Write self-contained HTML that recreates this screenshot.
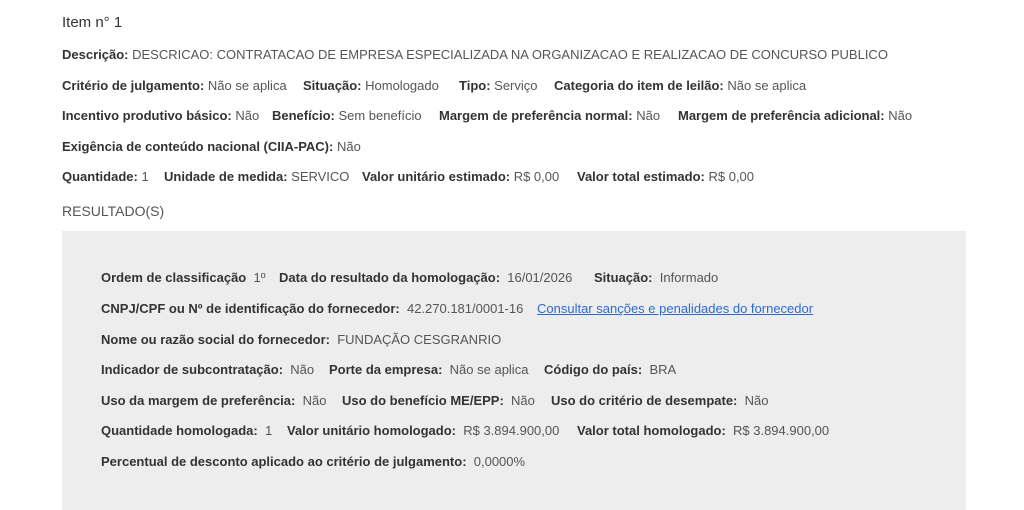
<!DOCTYPE html>
<html><head><meta charset="utf-8"><style>
body{margin:0;width:1024px;height:510px;background:#fff;position:relative;overflow:hidden;font-family:"Liberation Sans",sans-serif;color:#555;font-size:13px}
.s{position:absolute;white-space:nowrap;line-height:18px}
b{color:#333;font-weight:bold}
.box{position:absolute;left:62px;top:231px;width:904px;height:279px;background:#ededed}
a{color:#2a6ad8;text-decoration:underline}
</style></head><body>
<div class="s" style="left:62px;top:13px;font-size:15px;color:#333;line-height:20px">Item n° 1</div>
<div class="s" style="left:62px;top:46px"><b>Descrição:</b> DESCRICAO: CONTRATACAO DE EMPRESA ESPECIALIZADA NA ORGANIZACAO E REALIZACAO DE CONCURSO PUBLICO</div>
<div class="s" style="left:62px;top:77px"><b>Critério de julgamento:</b> Não se aplica</div>
<div class="s" style="left:303px;top:77px"><b>Situação:</b> Homologado</div>
<div class="s" style="left:459px;top:77px"><b>Tipo:</b> Serviço</div>
<div class="s" style="left:554px;top:77px"><b>Categoria do item de leilão:</b> Não se aplica</div>
<div class="s" style="left:62px;top:107px"><b>Incentivo produtivo básico:</b> Não</div>
<div class="s" style="left:272px;top:107px"><b>Benefício:</b> Sem benefício</div>
<div class="s" style="left:439px;top:107px"><b>Margem de preferência normal:</b> Não</div>
<div class="s" style="left:678px;top:107px"><b>Margem de preferência adicional:</b> Não</div>
<div class="s" style="left:62px;top:138px"><b>Exigência de conteúdo nacional (CIIA-PAC):</b> Não</div>
<div class="s" style="left:62px;top:168px"><b>Quantidade:</b> 1</div>
<div class="s" style="left:164px;top:168px"><b>Unidade de medida:</b> SERVICO</div>
<div class="s" style="left:362px;top:168px"><b>Valor unitário estimado:</b> R$ 0,00</div>
<div class="s" style="left:577px;top:168px"><b>Valor total estimado:</b> R$ 0,00</div>
<div class="s" style="left:62px;top:201px;font-size:14px;line-height:20px">RESULTADO(S)</div>
<div class="box"></div>
<div class="s" style="left:101px;top:269px"><b>Ordem de classificação</b>&nbsp; 1º</div>
<div class="s" style="left:279px;top:269px"><b>Data do resultado da homologação:</b>&nbsp; 16/01/2026</div>
<div class="s" style="left:594px;top:269px"><b>Situação:</b>&nbsp; Informado</div>
<div class="s" style="left:101px;top:300px"><b>CNPJ/CPF ou Nº de identificação do fornecedor:</b>&nbsp; 42.270.181/0001-16</div>
<div class="s" style="left:537px;top:300px"><a>Consultar sanções e penalidades do fornecedor</a></div>
<div class="s" style="left:101px;top:331px"><b>Nome ou razão social do fornecedor:</b>&nbsp; FUNDAÇÃO CESGRANRIO</div>
<div class="s" style="left:101px;top:361px"><b>Indicador de subcontratação:</b>&nbsp; Não</div>
<div class="s" style="left:329px;top:361px"><b>Porte da empresa:</b>&nbsp; Não se aplica</div>
<div class="s" style="left:544px;top:361px"><b>Código do país:</b>&nbsp; BRA</div>
<div class="s" style="left:101px;top:392px"><b>Uso da margem de preferência:</b>&nbsp; Não</div>
<div class="s" style="left:342px;top:392px"><b>Uso do benefício ME/EPP:</b>&nbsp; Não</div>
<div class="s" style="left:551px;top:392px"><b>Uso do critério de desempate:</b>&nbsp; Não</div>
<div class="s" style="left:101px;top:422px"><b>Quantidade homologada:</b>&nbsp; 1</div>
<div class="s" style="left:287px;top:422px"><b>Valor unitário homologado:</b>&nbsp; R$ 3.894.900,00</div>
<div class="s" style="left:577px;top:422px"><b>Valor total homologado:</b>&nbsp; R$ 3.894.900,00</div>
<div class="s" style="left:101px;top:453px"><b>Percentual de desconto aplicado ao critério de julgamento:</b>&nbsp; 0,0000%</div>
</body></html>
